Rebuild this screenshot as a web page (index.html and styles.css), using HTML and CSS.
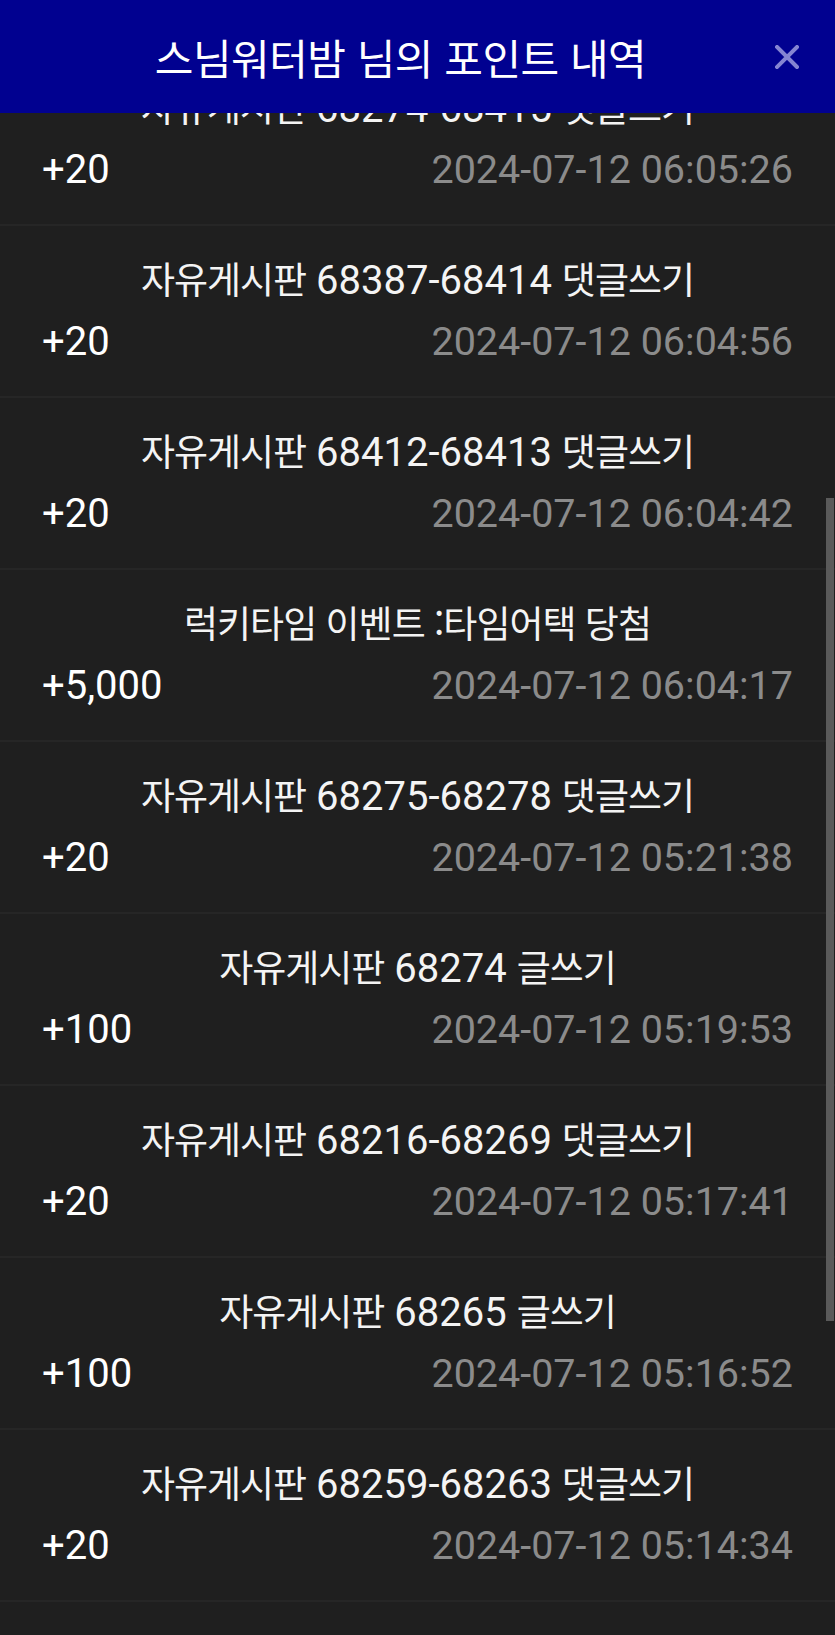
FILE: index.html
```html
<!DOCTYPE html>
<html lang="ko">
<head>
  <meta charset="UTF-8">
  <title>스님워터밤 님의 포인트 내역</title>
  <meta name="viewport" content="width=device-width, initial-scale=1.0">
  <link rel="stylesheet" href="styles.css">
</head>
<body>
  <div class="header">
    <div class="header-title">스님워터밤 님의 포인트 내역</div>
    <button class="close-btn" aria-label="닫기">
      <svg width="24" height="24" viewBox="0 0 24 24">
        <path d="M2 2 L22 22 M22 2 L2 22" stroke="currentColor" stroke-width="4" stroke-linecap="square" fill="none"/>
      </svg>
    </button>
  </div>

  <div class="point-list">
    <div class="point-row">
      <div class="point-title"><span class="ko">자유게시판</span> 68274-68415 <span class="ko">댓글쓰기</span></div>
      <div class="point-meta"><span class="amount">+20</span><span class="date">2024-07-12 06:05:26</span></div>
    </div>
    <div class="point-row">
      <div class="point-title"><span class="ko">자유게시판</span> 68387-68414 <span class="ko">댓글쓰기</span></div>
      <div class="point-meta"><span class="amount">+20</span><span class="date">2024-07-12 06:04:56</span></div>
    </div>
    <div class="point-row">
      <div class="point-title"><span class="ko">자유게시판</span> 68412-68413 <span class="ko">댓글쓰기</span></div>
      <div class="point-meta"><span class="amount">+20</span><span class="date">2024-07-12 06:04:42</span></div>
    </div>
    <div class="point-row">
      <div class="point-title"><span class="ko">럭키타임 이벤트 :타임어택 당첨</span></div>
      <div class="point-meta"><span class="amount">+5,000</span><span class="date">2024-07-12 06:04:17</span></div>
    </div>
    <div class="point-row">
      <div class="point-title"><span class="ko">자유게시판</span> 68275-68278 <span class="ko">댓글쓰기</span></div>
      <div class="point-meta"><span class="amount">+20</span><span class="date">2024-07-12 05:21:38</span></div>
    </div>
    <div class="point-row">
      <div class="point-title"><span class="ko">자유게시판</span> 68274 <span class="ko">글쓰기</span></div>
      <div class="point-meta"><span class="amount">+100</span><span class="date">2024-07-12 05:19:53</span></div>
    </div>
    <div class="point-row">
      <div class="point-title"><span class="ko">자유게시판</span> 68216-68269 <span class="ko">댓글쓰기</span></div>
      <div class="point-meta"><span class="amount">+20</span><span class="date">2024-07-12 05:17:41</span></div>
    </div>
    <div class="point-row">
      <div class="point-title"><span class="ko">자유게시판</span> 68265 <span class="ko">글쓰기</span></div>
      <div class="point-meta"><span class="amount">+100</span><span class="date">2024-07-12 05:16:52</span></div>
    </div>
    <div class="point-row">
      <div class="point-title"><span class="ko">자유게시판</span> 68259-68263 <span class="ko">댓글쓰기</span></div>
      <div class="point-meta"><span class="amount">+20</span><span class="date">2024-07-12 05:14:34</span></div>
    </div>
  </div>

  <div class="scroll-thumb"></div>
</body>
</html>
```

FILE: styles.css
```css
html, body {
  margin: 0;
  height: 100%;
  overflow: hidden;
}
body {
  background: #1f1f1f;
  color: #f4f4f4;
  font-family: Roboto, "Noto Sans CJK KR", sans-serif;
}

.header {
  position: fixed;
  top: 0;
  left: 0;
  right: 0;
  height: 113px;
  background: #010190;
  display: flex;
  align-items: center;
  padding-right: 36px;
  z-index: 2;
}
.header-title {
  flex: 1;
  padding-left: 26px;
  text-align: center;
  color: #fff;
  font-family: "Noto Sans CJK KR", sans-serif;
  font-size: 42px;
  line-height: 44px;
  letter-spacing: -0.5px;
}
.close-btn {
  width: 24px;
  height: 24px;
  padding: 0;
  border: none;
  background: none;
  color: #8585d2;
  cursor: pointer;
}
.close-btn svg {
  display: block;
}

.point-list {
  padding-top: 54px;
}
.point-row {
  height: 172px;
  box-sizing: border-box;
  border-bottom: 2px solid #262626;
  padding: 28px 42px 0;
}
.point-title {
  text-align: center;
  line-height: 48px;
  font-size: 40px;
  white-space: nowrap;
}
.point-title .ko {
  font-family: "Noto Sans CJK KR", sans-serif;
  font-size: 37px;
  letter-spacing: -1px;
}
.point-meta {
  margin-top: 13px;
  display: flex;
  justify-content: space-between;
  line-height: 48px;
  font-size: 40px;
}
.amount {
  color: #fff;
}
.date {
  color: #8b8b8b;
  font-size: 39.5px;
}

.scroll-thumb {
  position: fixed;
  top: 498px;
  right: 1px;
  width: 8px;
  height: 823px;
  background: #5a5a5a;
}
```
